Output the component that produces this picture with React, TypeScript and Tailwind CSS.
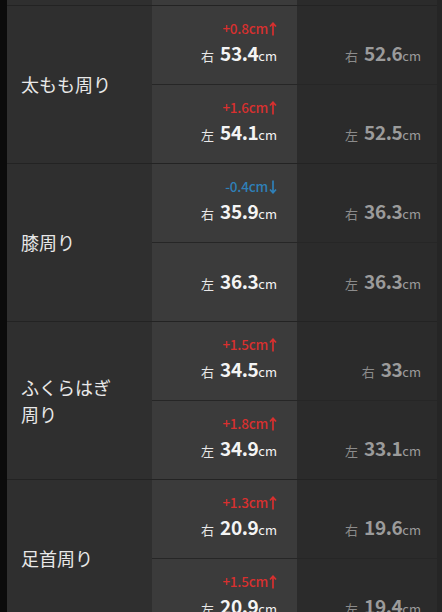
type Side = {
  side: string
  value: string
  change?: { text: string; up: boolean }
  prev: string
}

type Group = {
  label: string[]
  rows: Side[]
}

const groups: Group[] = [
  {
    label: ['太もも周り'],
    rows: [
      { side: '右', value: '53.4', change: { text: '+0.8cm', up: true }, prev: '52.6' },
      { side: '左', value: '54.1', change: { text: '+1.6cm', up: true }, prev: '52.5' },
    ],
  },
  {
    label: ['膝周り'],
    rows: [
      { side: '右', value: '35.9', change: { text: '-0.4cm', up: false }, prev: '36.3' },
      { side: '左', value: '36.3', prev: '36.3' },
    ],
  },
  {
    label: ['ふくらはぎ', '周り'],
    rows: [
      { side: '右', value: '34.5', change: { text: '+1.5cm', up: true }, prev: '33' },
      { side: '左', value: '34.9', change: { text: '+1.8cm', up: true }, prev: '33.1' },
    ],
  },
  {
    label: ['足首周り'],
    rows: [
      { side: '右', value: '20.9', change: { text: '+1.3cm', up: true }, prev: '19.6' },
      { side: '左', value: '20.9', change: { text: '+1.5cm', up: true }, prev: '19.4' },
    ],
  },
]

function Arrow({ up }: { up: boolean }) {
  return (
    <svg width="8" height="14" viewBox="0 0 8 14" className="ml-[1px]">
      {up ? (
        <path d="M4 13.5V1.5M1 4.5L4 1.2L7 4.5" stroke="currentColor" strokeWidth="1.7" fill="none" />
      ) : (
        <path d="M4 0.5V12.5M1 9.5L4 12.8L7 9.5" stroke="currentColor" strokeWidth="1.7" fill="none" />
      )}
    </svg>
  )
}

function Value({ side, value, muted }: { side: string; value: string; muted?: boolean }) {
  return (
    <div className={`flex items-baseline h-[30px] leading-[30px] ${muted ? 'text-[#9b9b9b]' : 'text-[#f4f4f4]'}`}>
      <span className={`text-[13px] ${muted ? 'text-[#8c8c8c]' : 'text-[#e8e8e8]'}`}>{side}</span>
      <span className="ml-[6px] text-[19px] font-bold tracking-[-0.4px]">{value}</span>
      <span className="text-[13px]">cm</span>
    </div>
  )
}

export default function App() {
  return (
    <div className="w-[442px] h-[612px] overflow-hidden flex bg-[#0b0b0b] font-['Noto_Sans_CJK_JP',sans-serif]">
      <div className="w-[7px] shrink-0" />
      <div className="flex-1 flex flex-col">
        {/* tail of the row above */}
        <div className="h-[6px] shrink-0 flex border-b border-[#232323]">
          <div className="w-[145px] bg-[#2f2f2f]" />
          <div className="w-[145px] bg-[#3b3b3b]" />
          <div className="flex-1 bg-[#2b2b2b]" />
        </div>
        {groups.map((g, gi) => (
          <div key={gi} className="flex shrink-0 border-b border-[#232323]">
            <div className="w-[145px] shrink-0 bg-[#2f2f2f] flex items-center pl-[14px] text-[18px] leading-[27px] text-[#e8e8e8]">
              <div>
                {g.label.map((l, li) => (
                  <div key={li}>{l}</div>
                ))}
              </div>
            </div>
            <div className="flex-1 flex flex-col">
              {g.rows.map((r, ri) => (
                <div key={ri} className={`flex ${ri === 0 ? 'h-[79px] border-b border-[#262626]' : 'h-[78px]'}`}>
                  <div className="w-[145px] shrink-0 bg-[#3b3b3b] flex flex-col justify-center items-end pr-[20px] pb-[3px]">
                    {r.change && (
                      <div
                        className={`flex items-center h-[18px] text-[13.5px] tracking-[-0.2px] font-medium ${
                          r.change.up ? 'text-[#d8302f]' : 'text-[#2f80b8]'
                        }`}
                      >
                        <span>{r.change.text}</span>
                        <Arrow up={r.change.up} />
                      </div>
                    )}
                    <Value side={r.side} value={r.value} />
                  </div>
                  <div className="flex-1 bg-[#2b2b2b] flex flex-col justify-center items-end pr-[16px] pb-[3px]">
                    {r.change && <div className="h-[18px]" />}
                    <Value side={r.side} value={r.prev} muted />
                  </div>
                </div>
              ))}
            </div>
          </div>
        ))}
      </div>
      <div className="w-[5px] shrink-0 bg-[#252525]" />
    </div>
  )
}
